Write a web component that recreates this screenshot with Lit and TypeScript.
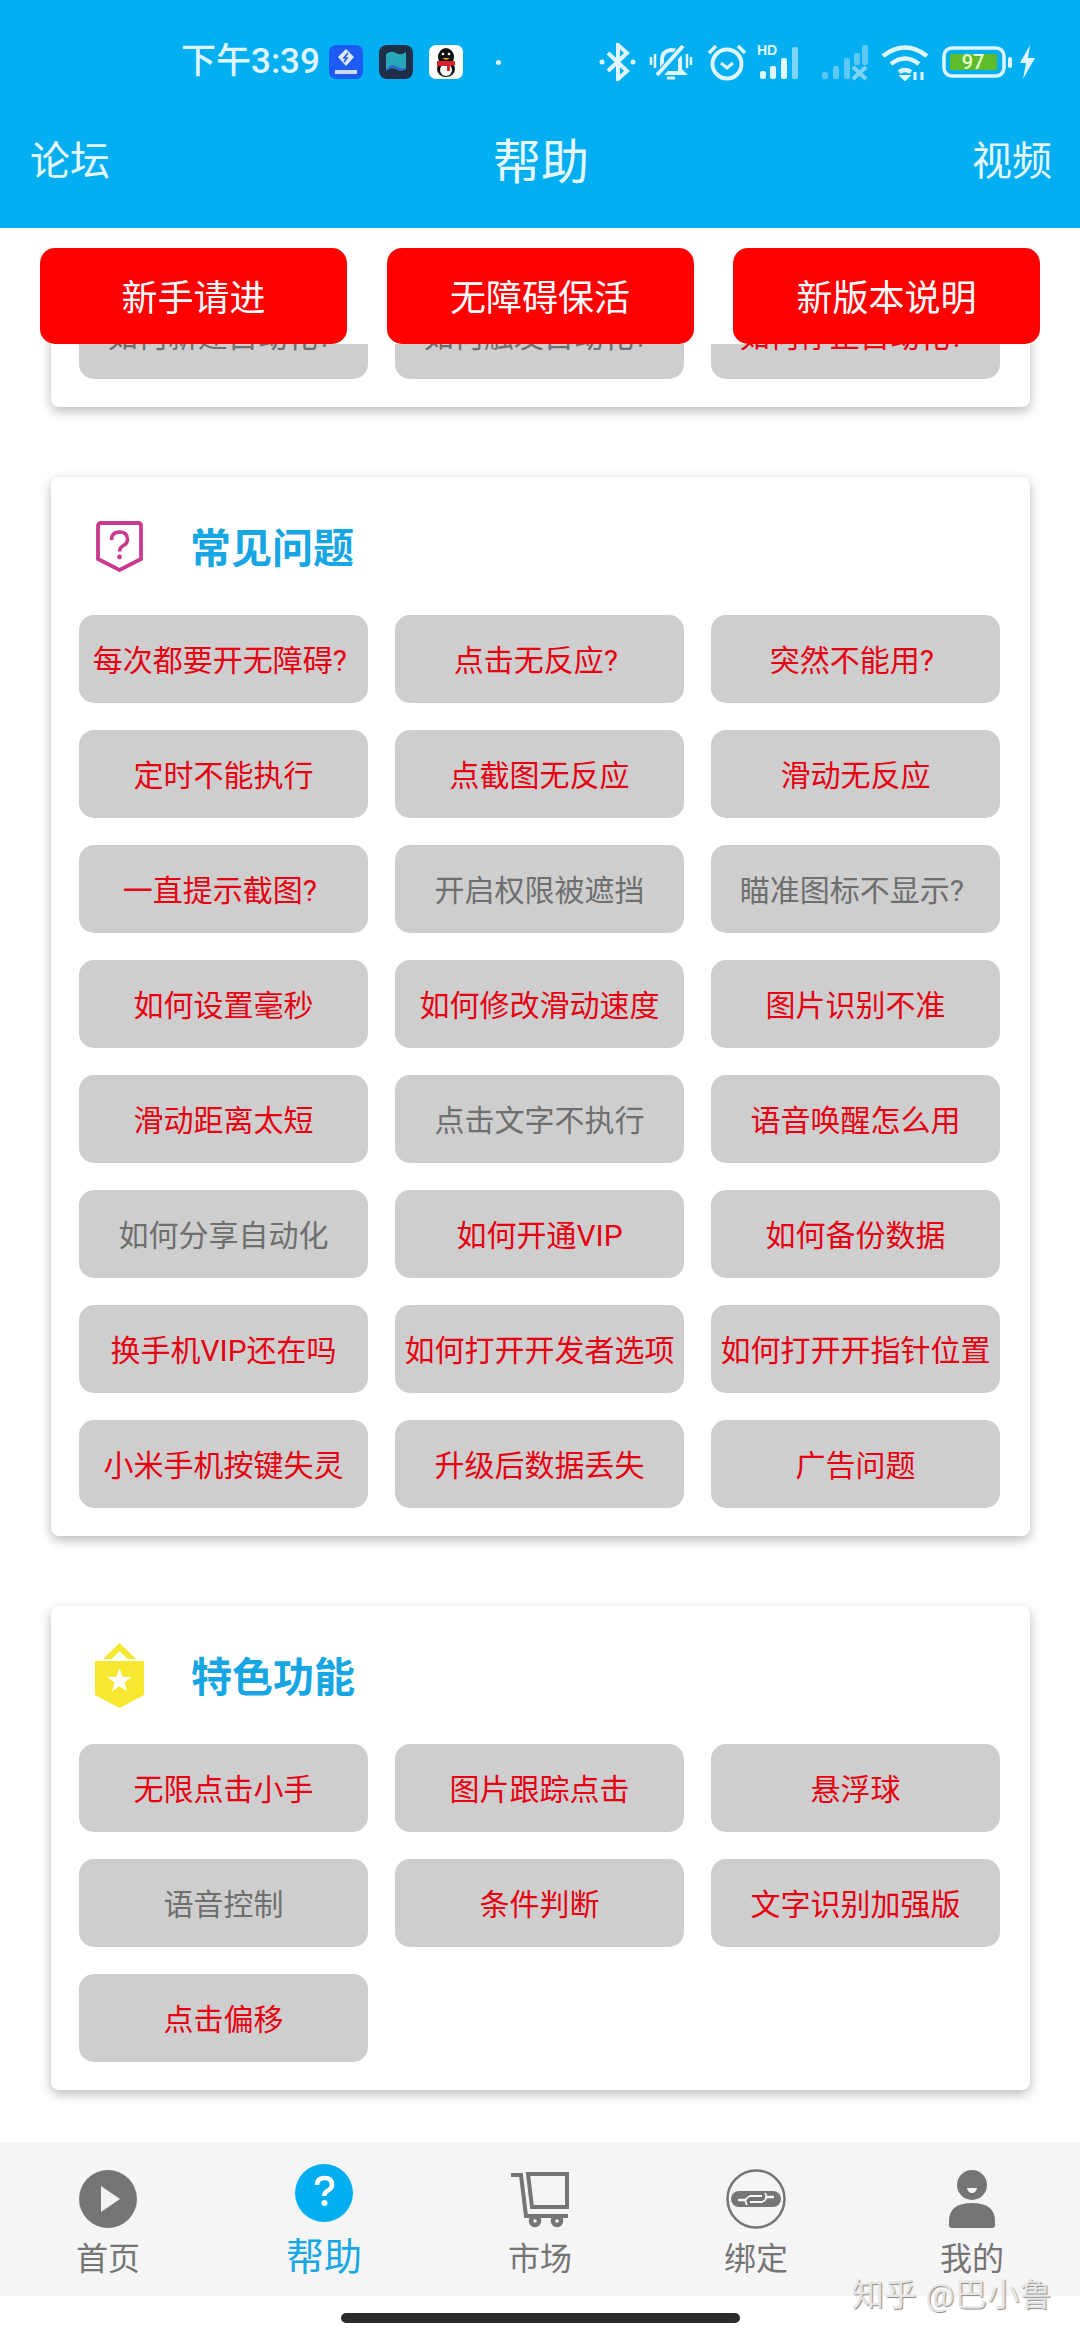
import {LitElement, html, css, svg} from 'lit';
import {customElement} from 'lit/decorators.js';

// [label, muted] - the labels ending in "? " really are off centre in the app
type Item = [string, boolean?];

const clipped: Item[] = [['如何新建自动化? ', true], ['如何触发自动化? ', true], ['如何停止自动化? ']];

const faq: Item[] = [
    ['每次都要开无障碍? '], ['点击无反应? '], ['突然不能用? '],
    ['定时不能执行'], ['点截图无反应'], ['滑动无反应'],
    ['一直提示截图? '], ['开启权限被遮挡', true], ['瞄准图标不显示? ', true],
    ['如何设置毫秒'], ['如何修改滑动速度'], ['图片识别不准'],
    ['滑动距离太短'], ['点击文字不执行', true], ['语音唤醒怎么用'],
    ['如何分享自动化', true], ['如何开通VIP'], ['如何备份数据'],
    ['换手机VIP还在吗'], ['如何打开开发者选项'], ['如何打开开指针位置'],
    ['小米手机按键失灵'], ['升级后数据丢失'], ['广告问题'],
];

const features: Item[] = [
    ['无限点击小手'], ['图片跟踪点击'], ['悬浮球'],
    ['语音控制', true], ['条件判断'], ['文字识别加强版'],
    ['点击偏移'],
];

const statusLeft = html`
    <svg class="app-icon" viewBox="0 0 34 34">
        <rect width="34" height="34" rx="7" fill="#1c5cf5"/>
        <path d="M17 4l8 8-8 9-8-9z" fill="#dfe8ff"/>
        <path d="M19 8l-4 5h3l-3 4" fill="none" stroke="#1c5cf5" stroke-width="1.6"/>
        <rect x="6" y="25" width="22" height="4" fill="#cdd9ff"/>
    </svg>
    <svg class="app-icon" viewBox="0 0 34 34">
        <rect width="34" height="34" rx="8" fill="#1f2f47"/>
        <path d="M7 9q5-4 10-1t10-1v17q-5 3-10 0t-10 2z" fill="#27a7bb"/>
        <path d="M7 24q5-6 10-3t10 2v1q-5 3-10 0t-10 2z" fill="#2a6fd0"/>
    </svg>
    <svg class="app-icon" viewBox="0 0 34 34">
        <rect width="34" height="34" rx="7" fill="#fff"/>
        <ellipse cx="17" cy="12" rx="8" ry="9" fill="#111"/>
        <ellipse cx="17" cy="24" rx="9" ry="8" fill="#111"/>
        <ellipse cx="17" cy="25" rx="6" ry="6" fill="#fff"/>
        <path d="M8 16h18v4l-5 1v5h-3v-5H8z" fill="#d8232a"/>
        <circle cx="14" cy="9" r="1.3" fill="#fff"/><circle cx="20" cy="9" r="1.3" fill="#fff"/>
        <path d="M13 13h8l-4 2z" fill="#f6b322"/>
    </svg>
`;

const statusRight = html`
    <svg class="st" style="width:38px" viewBox="0 0 38 38" fill="none" stroke="#dff6ff" stroke-width="4">
        <path d="M9 10l19 18-9 8V2l9 8L9 28"/>
        <circle cx="3" cy="19" r="2.5" fill="#dff6ff" stroke="none"/><circle cx="34" cy="19" r="2.5" fill="#dff6ff" stroke="none"/>
    </svg>
    <svg class="st" style="width:44px;margin-left:12px" viewBox="0 0 44 38" fill="none" stroke="#dff6ff" stroke-width="4">
        <path d="M13 27V17q0-9 9-10 8 0 9 8v12l3 3H10z"/>
        <path d="M8 34L36 2" stroke="#03aef1" stroke-width="8"/>
        <path d="M8 32L34 3"/>
        <path d="M2 14v8M6 11v14M38 11v14M42 14v8" stroke-width="2.5"/>
        <path d="M18 35h8" stroke-width="3"/>
    </svg>
    <svg class="st" style="width:40px;margin-left:14px" viewBox="0 0 40 38" fill="none" stroke="#dff6ff">
        <circle cx="20" cy="21" r="14.5" stroke-width="4"/>
        <path d="M14 20l6 5 6-5" stroke-width="3"/>
        <path d="M2 10l7-7M38 10l-7-7" stroke-width="3.5"/>
    </svg>
    <svg class="st" style="width:50px;margin-left:10px" viewBox="0 0 50 38">
        <text x="0" y="12" font-family="Liberation Sans" font-weight="700" font-size="14" fill="#dff6ff">HD</text>
        <rect x="3" y="28" width="6" height="8" rx="2" fill="#dff6ff"/>
        <rect x="13" y="23" width="6" height="13" rx="2" fill="#dff6ff"/>
        <rect x="24" y="15" width="6" height="21" rx="2" fill="#dff6ff"/>
        <rect x="35" y="4" width="6" height="32" rx="2" fill="#7fd4f6"/>
    </svg>
    <svg class="st" style="width:48px;margin-left:13px" viewBox="0 0 48 38" fill="#5cc8f3">
        <rect x="2" y="29" width="6" height="7" rx="2"/>
        <rect x="13" y="23" width="6" height="13" rx="2"/>
        <rect x="24" y="15" width="6" height="21" rx="2"/>
        <rect x="34" y="10" width="6" height="12" rx="2"/>
        <rect x="42" y="2" width="6" height="20" rx="2"/>
        <path d="M33 24l13 12M46 24L33 36" stroke="#7fd4f6" stroke-width="4"/>
    </svg>
    <svg class="st" style="width:48px;margin-left:13px" viewBox="0 0 48 38" fill="none" stroke="#dff6ff" stroke-width="4.5">
        <path d="M2 13q22-17 44 0"/>
        <path d="M10 21q14-11 28 0"/>
        <path d="M18 29q6-4 12 0"/>
        <path d="M20 33l4 4 4-4z" fill="#dff6ff" stroke-width="2"/>
        <path d="M34 29v8M41 29v8" stroke-width="3"/>
    </svg>
    <svg class="st" style="width:72px;margin-left:13px" viewBox="0 0 72 38">
        <rect x="2" y="5" width="60" height="28" rx="8" fill="none" stroke="#dff6ff" stroke-width="3.5"/>
        <rect x="8" y="11" width="47" height="16" rx="1" fill="#5dbb2c"/>
        <text x="31" y="26" text-anchor="middle" font-family="Roboto" font-weight="500" font-size="20" fill="#e8ffd0">97</text>
        <rect x="66" y="14" width="4" height="11" rx="2" fill="#dff6ff"/>
    </svg>
    <svg class="st" style="width:18px;margin-left:4px" viewBox="0 0 18 38">
        <path d="M12 2L2 20h6l-3 16L17 15h-7z" fill="#dff6ff"/>
    </svg>
`;

const questionIcon = svg`
    <path d="M2 5q0-3 3-3h37q3 0 3 3v33L23.500 49 2 38z" fill="none" stroke="#c93a8e" stroke-width="3.800"/>
    <path d="M15.500 19q0-8 8-8t8 7.500q0 4-4 6t-4 6" fill="none" stroke="#c93a8e" stroke-width="3.500"/>
    <circle cx="23.500" cy="36" r="2.400" fill="#c93a8e"/>
`;

const starIcon = svg`
    <path d="M24.500 0l16.500 16h-8.500l-8-8-8 8H8z" fill="#f6e72f"/>
    <path d="M0 18h49v34L24.500 65 0 52z" fill="#f6e72f"/>
    <path d="M24.500 25l3.060 8.790 9.300.19-7.410 5.630 2.690 8.920-7.640-5.320-7.640 5.320 2.690-8.920-7.410-5.630 9.300-.19z" fill="#fff"/>
`;

@customElement('app-root')
export class AppRoot extends LitElement {

    static override styles = css`
        :host {
            display: block;
            position: relative;
            width: 1080px;
            height: 2340px;
            overflow: hidden;
            background: #fff;
            font-family: Roboto, "Noto Sans CJK SC", sans-serif;
        }

        .page {
            display: flex;
            flex-direction: column;
            height: 100%;
        }

        .top {
            flex: none;
            height: 228px;
            box-sizing: border-box;
            background: #03aef1;
            color: #e6f8ff;
        }

        .status {
            height: 64px;
            padding-top: 30px;
            display: flex;
            align-items: center;
        }

        .time {
            margin-left: 181px;
            width: 148px;
            font-size: 35px;
            font-weight: 500;
            line-height: 34px;
            white-space: nowrap;
            color: #dff6ff;
        }

        .app-icon {
            width: 34px;
            height: 34px;
            margin-right: 16px;
        }

        .dot {
            width: 5px;
            height: 5px;
            margin-left: 17px;
            border-radius: 50%;
            background: #dff6ff;
        }

        .st {
            height: 38px;
            flex: none;
        }

        .st-right {
            margin-left: 98px;
            display: flex;
            align-items: center;
        }

        .title-row {
            display: flex;
            align-items: center;
            justify-content: space-between;
            padding: 0 28px 0 30px;
            font-size: 40px;
            height: 64px;
            margin-top: 32px;
        }

        .title-row .title {
            font-size: 48px;
        }

        .actions {
            flex: none;
            height: 116px;
            box-sizing: border-box;
            padding: 20px 40px 0;
            display: grid;
            grid-template-columns: repeat(3, 307px);
            justify-content: space-between;
            background: #fff;
            position: relative;
            z-index: 1;
        }

        .actions div {
            display: flex;
            align-items: center;
            justify-content: center;
            box-sizing: border-box;
            padding-bottom: 2px;
            border-radius: 15px;
            background: #ff0000;
            color: #fff;
            font-size: 36px;
        }

        .scroll {
            flex: 1;
            min-height: 0;
            overflow: hidden;
            padding: 0 50px 0 51px;
        }

        .card {
            background: #fff;
            border-radius: 8px;
            box-shadow: 0 4px 12px rgba(0, 0, 0, 0.28);
            padding: 0 30px 28px 28px;
            margin-bottom: 70px;
        }

        .card.first {
            margin-top: -200px;
            padding-top: 147px;
        }

        .head {
            height: 138px;
            box-sizing: border-box;
            display: flex;
            align-items: center;
            color: #15a6e3;
            font-size: 41px;
            font-weight: 700;
        }

        .head svg {
            flex: none;
        }

        .head .name {
            margin-left: 46px;
            padding-bottom: 2px;
        }

        .grid {
            display: grid;
            grid-template-columns: repeat(3, 289px);
            grid-auto-rows: 88px;
            gap: 27px;
        }

        .grid div {
            display: flex;
            align-items: center;
            justify-content: center;
            box-sizing: border-box;
            padding-bottom: 3px;
            border-radius: 15px;
            background: #cecece;
            color: #e60012;
            font-size: 30px;
            white-space: pre;
        }

        .grid div.muted {
            color: #6f6f6f;
        }

        .tabs {
            flex: none;
            height: 154px;
            display: grid;
            grid-template-columns: repeat(5, 216px);
            background: #f5f5f5;
        }

        .tab {
            display: flex;
            flex-direction: column;
            align-items: center;
            color: #757575;
            font-size: 32px;
            line-height: 44px;
        }

        .tab svg {
            display: block;
            margin-top: 27px;
            width: 60px;
            height: 60px;
        }

        .tab span {
            margin-top: 8px;
        }

        .tab.active {
            color: #15a6e3;
            font-size: 38px;
        }

        .tab.active svg {
            margin-top: 21px;
        }

        .tab.active span {
            margin-top: 12px;
        }

        .home-bar {
            flex: none;
            height: 44px;
            display: flex;
            justify-content: center;
            padding-top: 17px;
            box-sizing: border-box;
        }

        .home-bar div {
            width: 399px;
            height: 10px;
            border-radius: 5px;
            background: #2b2b2b;
        }

        .watermark {
            position: absolute;
            left: 852px;
            top: 2273px;
            font-size: 32px;
            line-height: 44px;
            letter-spacing: 0.5px;
            white-space: nowrap;
            color: #e6e6e6;
            text-shadow: 1px 1px 1px #8a8a8a;
        }
    `;

    private renderGrid(items: Item[]) {
        return html`
            <div class="grid">
                ${items.map(([label, muted]) => html`<div class="${muted ? 'muted' : ''}">${label}</div>`)}
            </div>
        `;
    }

    override render() {
        return html`
            <div class="page">
                <div class="top">
                    <div class="status">
                        <span class="time">下午3:39</span>
                        ${statusLeft}
                        <span class="dot"></span>
                        <div class="st-right">${statusRight}</div>
                    </div>
                    <div class="title-row">
                        <span>论坛</span>
                        <span class="title">帮助</span>
                        <span>视频</span>
                    </div>
                </div>

                <div class="actions">
                    <div>新手请进</div>
                    <div>无障碍保活</div>
                    <div>新版本说明</div>
                </div>

                <div class="scroll">
                    <section class="card first">
                        ${this.renderGrid(clipped)}
                    </section>
                    <section class="card">
                        <div class="head">
                            <svg width="47" height="51" viewBox="0 0 47 51" style="margin-left:17px">${questionIcon}</svg>
                            <span class="name" style="margin-left:47px">常见问题</span>
                        </div>
                        ${this.renderGrid(faq)}
                    </section>
                    <section class="card">
                        <div class="head">
                            <svg width="50" height="65" viewBox="0 0 50 65" style="margin-left:16px">${starIcon}</svg>
                            <span class="name">特色功能</span>
                        </div>
                        ${this.renderGrid(features)}
                    </section>
                </div>

                <div class="tabs">
                    <div class="tab">
                        <svg viewBox="0 0 60 60">
                            <circle cx="30" cy="30" r="29" fill="#757575"/>
                            <path d="M23 17l19 13-19 13z" fill="#f2f2f2"/>
                        </svg>
                        <span>首页</span>
                    </div>
                    <div class="tab active">
                        <svg viewBox="0 0 60 60">
                            <circle cx="30" cy="30" r="29" fill="#03aef1"/>
                            <path d="M23 22q0-7 7.500-7t7.500 6.500q0 4-4 6t-3.500 5.500" fill="none" stroke="#fff" stroke-width="4.500"/>
                            <circle cx="30.500" cy="40" r="3" fill="#fff"/>
                        </svg>
                        <span>帮助</span>
                    </div>
                    <div class="tab">
                        <svg viewBox="0 0 60 60" fill="none" stroke="#757575" stroke-width="4">
                            <path d="M1 6h10l5 41h42"/>
                            <path d="M18 5h39v33H22z"/>
                            <circle cx="25" cy="52" r="4" stroke-width="4.500"/>
                            <circle cx="47" cy="52" r="4" stroke-width="4.500"/>
                        </svg>
                        <span>市场</span>
                    </div>
                    <div class="tab">
                        <svg viewBox="0 0 60 60" fill="none">
                            <circle cx="30" cy="30" r="28.500" stroke="#757575" stroke-width="2.500"/>
                            <rect x="5" y="22" width="50" height="16" rx="8" fill="#757575"/>
                            <path d="M12 31H20M39 28H48" stroke="#f5f5f5" stroke-width="2.500"/>
                            <path d="M21 36q-4-6 3-9H36M39 24q4 6-3 9H24" stroke="#f5f5f5" stroke-width="1.800"/>
                        </svg>
                        <span>绑定</span>
                    </div>
                    <div class="tab">
                        <svg viewBox="0 0 60 60">
                            <circle cx="30" cy="16" r="15" fill="#757575"/>
                            <path d="M25 19h10q-1 5-5 5t-5-5z" fill="#f5f5f5"/>
                            <path d="M7 52q0-18 23-18t23 18v4q0 3-3 3H10q-3 0-3-3z" fill="#757575"/>
                        </svg>
                        <span>我的</span>
                    </div>
                </div>

                <div class="home-bar"><div></div></div>
            </div>
            <div class="watermark">知乎 @巴小鲁</div>
        `;
    }
}
